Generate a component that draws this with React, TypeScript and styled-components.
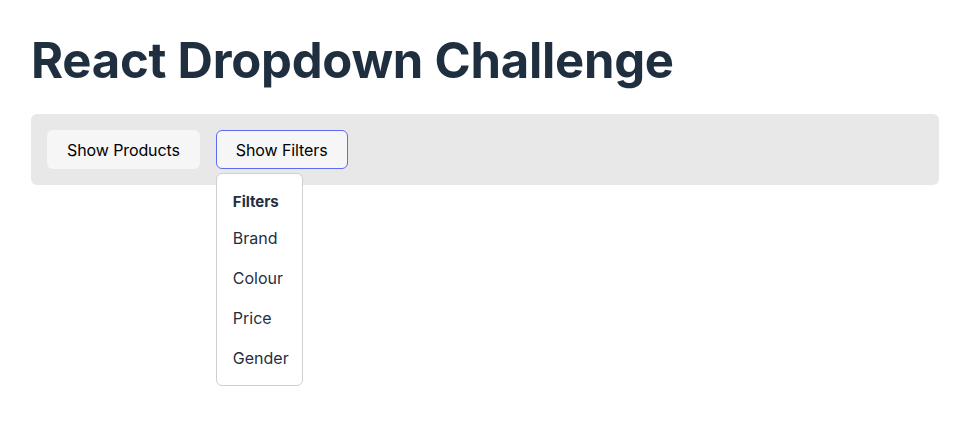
import React, { useState } from "react";
import styled, { createGlobalStyle } from "styled-components";

const GlobalStyle = createGlobalStyle`
  html, body, #root {
    margin: 0;
    padding: 0;
    min-height: 100%;
    height: 100%;
    background: #fff;
  }
  body {
    font-family: Inter, "Noto Sans", sans-serif;
    color: #1f2f3f;
  }
`;

const Page = styled.div`
  min-height: 100vh;
  padding: 26px 32px 0 31px;
  box-sizing: border-box;
`;

const Title = styled.h1`
  margin: 0 0 18px 0;
  font-size: 49px;
  line-height: 70px;
  font-weight: 700;
  letter-spacing: -0.25px;
  color: #1f2f3f;
`;

const Toolbar = styled.div`
  display: flex;
  flex-direction: row;
  align-items: center;
  gap: 16px;
  padding: 16px;
  background: #e8e8e8;
  border-radius: 6px;
`;

const MenuWrap = styled.div`
  position: relative;
`;

const Button = styled.button<{ $active?: boolean }>`
  height: 39px;
  padding: 0 19px;
  box-sizing: border-box;
  border-radius: 6px;
  border: 1px solid ${(p) => (p.$active ? "#5b6cf2" : "transparent")};
  background: #f6f6f6;
  color: #000;
  font-family: Inter, "Noto Sans", sans-serif;
  font-size: 16px;
  letter-spacing: -0.1px;
  cursor: pointer;
`;

const Dropdown = styled.ul`
  position: absolute;
  z-index: 10;
  top: 43px;
  left: 0;
  margin: 0;
  padding: 11px 16px 7px;
  list-style: none;
  width: 87px;
  box-sizing: border-box;
  background: #fff;
  border: 1px solid #cfcfcf;
  border-radius: 6px;
  display: flex;
  flex-direction: column;
  .heading {
    font-size: 15px;
    font-weight: 700;
    line-height: 33px;
    height: 33px;
  }
  .item {
    font-size: 16px;
    line-height: 40px;
    height: 40px;
    color: #1f2f3f;
  }
`;

const filters = ["Brand", "Colour", "Price", "Gender"];

export default function App() {
  const [open, setOpen] = useState(true);
  return (
    <>
      <GlobalStyle />
      <Page>
        <Title>React Dropdown Challenge</Title>
        <Toolbar>
          <Button>Show Products</Button>
          <MenuWrap>
            <Button $active={open} onClick={() => setOpen(!open)}>
              Show Filters
            </Button>
            {open && (
              <Dropdown>
                <li className="heading">Filters</li>
                {filters.map((f) => (
                  <li className="item" key={f}>
                    {f}
                  </li>
                ))}
              </Dropdown>
            )}
          </MenuWrap>
        </Toolbar>
      </Page>
    </>
  );
}
